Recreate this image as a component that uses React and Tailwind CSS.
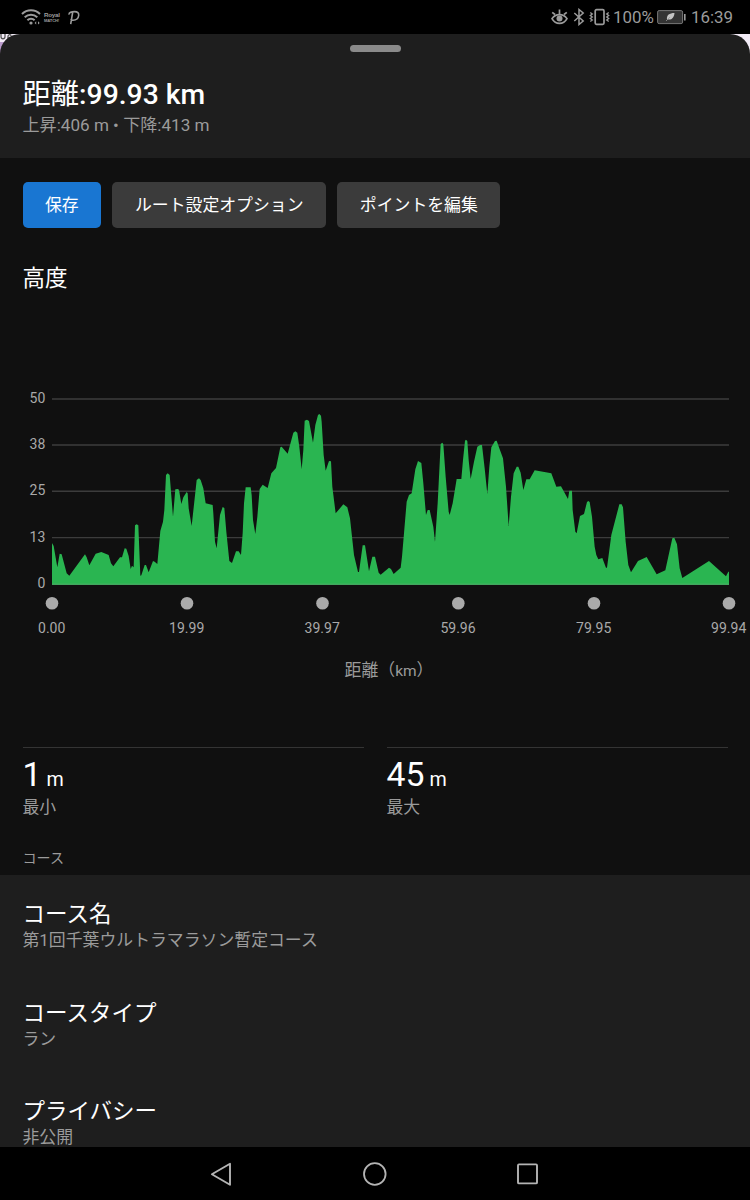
const gridLines = [
  { label: "50", y: 19 },
  { label: "38", y: 65 },
  { label: "25", y: 111.3 },
  { label: "13", y: 157.6 },
  { label: "0", y: 204 },
];

const ticks = [
  { label: "0.00", x: 52 },
  { label: "19.99", x: 187 },
  { label: "39.97", x: 322.5 },
  { label: "59.96", x: 458.3 },
  { label: "79.95", x: 594 },
  { label: "99.94", x: 729 },
];

// elevation profile, in thirds of a pixel
const profile = `156,489 161,498 172,562 179,521 185,523 200,580 208,587 255,523 260,532 268,556 287,521 304,516
326,525 333,550 340,559 360,532 366,532 374,505 379,506 386,528 392,567 396,557 401,562 405,436 410,433 415,436
421,587 424,586 434,555 438,555 446,577 459,543 464,545 472,552 481,453 489,425 493,390 498,285 503,280 509,285
519,410 526,328 535,327 538,335 544,372 550,352 560,336 563,340 566,385 575,438 590,300 597,295 602,300 610,325
617,370 638,375 640,400 645,485 650,505 660,405 668,381 673,384 679,455 688,543 696,549 708,514 716,514 723,525
728,460 732,370 737,322 752,322 755,345 759,420 766,462 772,410 779,327 788,314 803,324 814,280 828,264 841,202
845,200 863,221 880,158 886,154 892,158 898,200 905,268 910,210 914,122 921,119 927,123 939,188 946,135 954,105
958,102 963,107 965,125 971,225 977,272 987,243 993,244 997,320 1007,400 1030,373 1042,382 1050,415 1062,525
1074,576 1077,576 1088,496 1095,496 1107,574 1117,530 1125,530 1136,578 1142,584 1167,563 1173,567 1181,582
1202,563 1206,530 1212,460 1220,365 1227,345 1235,340 1246,268 1254,243 1264,249 1270,310 1278,405 1283,390
1289,390 1300,440 1305,485 1313,370 1322,192 1327,188 1330,193 1337,290 1346,395 1349,405 1358,370 1370,297
1384,297 1389,240 1395,182 1398,179 1402,183 1406,240 1412,297 1422,245 1432,200 1440,195 1446,195 1454,265
1462,342 1468,260 1474,202 1485,183 1490,182 1498,205 1509,235 1518,320 1526,438 1533,350 1541,280 1550,260
1555,260 1562,278 1570,330 1579,298 1589,298 1604,271 1654,280 1669,320 1683,319 1704,357 1708,332 1716,332
1718,390 1726,455 1730,460 1740,408 1752,402 1761,366 1765,363 1769,366 1776,410 1784,500 1789,525 1795,538
1807,534 1818,563 1821,563 1834,465 1858,373 1865,373 1869,382 1877,485 1885,555 1893,577 1914,543 1940,531
1970,583 1996,571 2017,475 2023,473 2031,493 2039,565 2047,594 2127,543 2178,589 2185,575 2187,575 2187,614 156,614`;

const courseRows = [
  { title: "コース名", value: "第1回千葉ウルトラマラソン暫定コース" },
  { title: "コースタイプ", value: "ラン" },
  { title: "プライバシー", value: "非公開" },
];

function StatusBar() {
  return (
    <div className="flex h-[34px] shrink-0 items-center bg-black pl-[21px] pr-[17px] text-[#9b9b9b]">
      <svg className="h-[18px] w-[20px]" viewBox="0 0 20 18" fill="none" stroke="currentColor" strokeWidth="2">
        <path d="M1 6C6 1 14 1 19 6" />
        <path d="M3.7 9.3C7.3 5.8 12.7 5.8 16.3 9.3" />
        <path d="M6.4 12.3c2-2 5.2-2 7.2 0" />
        <circle cx="10" cy="15" r="1.6" fill="currentColor" stroke="none" />
        <path d="M15.2 13.2v3.4l-1.6-1.7zM17 13.2v3.4l1.7-1.7z" fill="currentColor" stroke="none" />
      </svg>
      <div className="ml-[3px] flex w-[17px] flex-col font-['Liberation_Sans'] font-bold">
        <span className="text-[6.2px] leading-[6px] tracking-[-0.2px]">Royal</span>
        <span className="text-[4.2px] leading-[5px] tracking-[-0.2px]">MATCH!</span>
      </div>
      <svg className="ml-[7px] h-[16px] w-[12px]" viewBox="0 0 12 16" fill="none" stroke="currentColor" strokeWidth="1.6">
        <path d="M4.8 2.5 2.7 15.2M1 5.6C.8 3.2 3.5 2.6 6.5 2.6c3.2 0 4.5 1.6 4.2 3.9-.4 3.2-3 4.7-5.6 4.7-1.4 0-2-.4-2-1.2" />
      </svg>
      <svg className="ml-auto h-[18px] w-[17px]" viewBox="0 0 17 18" fill="none" stroke="currentColor" strokeWidth="1.7">
        <path d="M1 10.6c3.6-5.4 11.4-5.4 15 0-3.6 6.4-11.4 6.4-15 0z" />
        <path d="M8.5 6V1.5M4 6.5 1.2 4.3M13 6.5l2.8-2.2" />
        <circle cx="8.5" cy="10.6" r="3" fill="currentColor" stroke="none" />
      </svg>
      <svg className="ml-[5px] h-[18px] w-[12px]" viewBox="0 0 12 18" fill="none" stroke="currentColor" strokeWidth="1.5">
        <path d="m1.3 5 8.9 8L6 16.5v-15L10.2 5l-8.9 8" />
      </svg>
      <svg className="ml-[4px] h-[18px] w-[21px]" viewBox="0 0 21 18" fill="none" stroke="currentColor" strokeWidth="1.7">
        <rect x="6.2" y="1.7" width="8.8" height="14.6" rx="1.3" />
        <path d="M1.3 4.5 3.3 6l-2 1.5 2 1.5-2 1.5 2 1.5-2 1.5M19.7 4.5 17.7 6l2 1.5-2 1.5 2 1.5-2 1.5 2 1.5" strokeWidth="1.3" />
      </svg>
      <span className="ml-[3px] w-[41px] font-['Roboto'] text-[16.9px] leading-5">100%</span>
      <svg className="ml-[3px] h-[16px] w-[29px]" viewBox="0 0 29 16" fill="none" stroke="currentColor">
        <rect x=".6" y="1.6" width="25" height="13" rx="1.5" fill="#343434" stroke="#777" />
        <path d="M27.8 5v6.5" strokeWidth="1.6" />
        <path d="M17.5 4c-5 0-8.2 2.2-7.5 6.4 5 1 7-1.7 7.5-6.4z" fill="#c4c4c4" stroke="none" />
        <path d="m9 12 4-4" strokeWidth=".8" />
      </svg>
      <span className="ml-[5px] w-[42px] whitespace-nowrap font-['Roboto'] text-[16.9px] leading-5">16:39</span>
    </div>
  );
}

function ElevationChart() {
  return (
    <svg className="mt-[88px] block h-[260px] w-[750px] font-['Roboto',sans-serif]" viewBox="0 0 750 260">
      {gridLines.map((line) => (
        <g key={line.label}>
          <path d={`M52 ${line.y}H729`} stroke="#3c3c3c" strokeWidth="1.4" />
          <text x="45.3" y={line.y + 4} textAnchor="end" fontSize="14" fill="#a9a9a9">
            {line.label}
          </text>
        </g>
      ))}
      <polygon points={profile} transform="scale(.33333)" fill="#2ab551" />
      <path d="M52 204.2H729" stroke="#4dae69" strokeWidth="1" />
      {ticks.map((tick) => (
        <g key={tick.label}>
          <circle cx={tick.x} cy="223.3" r="6.3" fill="#aaa" />
          <text x={tick.x - 0.3} y="252.6" textAnchor="middle" fontSize="14" fill="#a9a9a9">
            {tick.label}
          </text>
        </g>
      ))}
    </svg>
  );
}

function Stat({ value, label }) {
  return (
    <div className="flex-1 border-t-[1.5px] border-[#343434]">
      <div className="mt-[7px] flex items-baseline gap-[5px] leading-[40px] text-white">
        <span className="text-[33.75px]">{value}</span>
        <span className="text-[19.7px]">m</span>
      </div>
      <div className="mt-[-3px] text-[16.875px] leading-5 text-[#9b9b9b]">{label}</div>
    </div>
  );
}

function NavBar() {
  return (
    <div className="flex h-[53px] shrink-0 items-center justify-between bg-black pl-[209px] pr-[210px] text-[#b4b4b4]">
      <svg className="h-[26px] w-[26px]" viewBox="0 0 26 26" fill="none" stroke="currentColor" strokeWidth="1.9" strokeLinejoin="round">
        <path d="M21 2.7v21L2.9 13.3z" />
      </svg>
      <svg className="h-[26px] w-[26px]" viewBox="0 0 26 26" fill="none" stroke="currentColor" strokeWidth="1.8">
        <circle cx="12.8" cy="13" r="10.8" />
      </svg>
      <svg className="h-[26px] w-[26px]" viewBox="0 0 26 26" fill="none" stroke="currentColor" strokeWidth="1.9">
        <rect x="4" y="3.4" width="19" height="19" rx="1" />
      </svg>
    </div>
  );
}

export default function App() {
  return (
    <div className="flex h-[1200px] w-[750px] flex-col overflow-hidden bg-black font-['Roboto','Noto_Sans_CJK_JP',sans-serif]" lang="ja">
      <StatusBar />
      <div className="relative flex min-h-0 flex-1 flex-col bg-[#f3ecf7]">
        {/* map showing behind the rounded corners */}
        <svg className="absolute left-0 top-0 h-[20px] w-[20px]" viewBox="0 0 20 20" fill="none">
          <path d="M0 8h7L0 20z" fill="#b99acb" />
          <path d="M1 0v2.5c0 3 4 3 4 0V0M8 5.5V2c1-2 3-1.5 3 0" stroke="#555" strokeWidth="1.3" />
        </svg>
        <div className="relative h-[124px] shrink-0 rounded-t-[20px] bg-[#1e1e1e] px-[22.5px] pt-[11px]">
          <div className="mx-auto h-[7px] w-[51px] rounded-full bg-[#8a8a8a]" />
          <h1 className="mt-[26px] text-[28.3px] leading-[34px] text-white">
            距離<span className="font-medium">:99.93 km</span>
          </h1>
          <p className="mt-[3px] text-[17.1px] leading-5 text-[#9b9b9b]">上昇:406 m • 下降:413 m</p>
        </div>

        <div className="h-[717px] shrink-0 bg-[#101010] pt-6">
          <div className="flex gap-[11.25px] px-[22.5px] text-[16.875px] text-white">
            <button className="h-[45.5px] rounded-[5px] bg-[#1976d2] px-[22.5px] pt-[2px]">保存</button>
            <button className="h-[45.5px] rounded-[5px] bg-[#3b3b3b] px-[22.5px] pt-[2px]">ルート設定オプション</button>
            <button className="h-[45.5px] rounded-[5px] bg-[#3b3b3b] px-[22.5px] pt-[2px]">ポイントを編集</button>
          </div>
          <h2 className="mt-[36.5px] px-[22.5px] text-[22.5px] leading-[28px] text-white">高度</h2>
          <ElevationChart />
          <div className="mt-[20px] flex h-5 items-baseline justify-center pl-[28px] text-[16.875px] leading-5 text-[#9b9b9b]">
            <span>距離（</span>
            <span className="text-[15.5px]">km</span>
            <span>）</span>
          </div>
          <div className="mt-[67px] flex gap-[23px] px-[22.5px]">
            <Stat value="1" label="最小" />
            <Stat value="45" label="最大" />
          </div>
          <div className="mt-[32px] px-[22.5px] text-[14.06px] leading-[18px] text-[#9b9b9b]">コース</div>
        </div>

        <div className="min-h-0 flex-1 overflow-hidden bg-[#1e1e1e] px-[22.5px] pt-[25px]">
          {courseRows.map((row) => (
            <div key={row.title} className="h-[98.5px]">
              <div className="text-[22.5px] leading-[28px] text-white">{row.title}</div>
              <div className="mt-[2px] text-[16.875px] leading-5 text-[#9b9b9b]">{row.value}</div>
            </div>
          ))}
        </div>
      </div>
      <NavBar />
    </div>
  );
}
